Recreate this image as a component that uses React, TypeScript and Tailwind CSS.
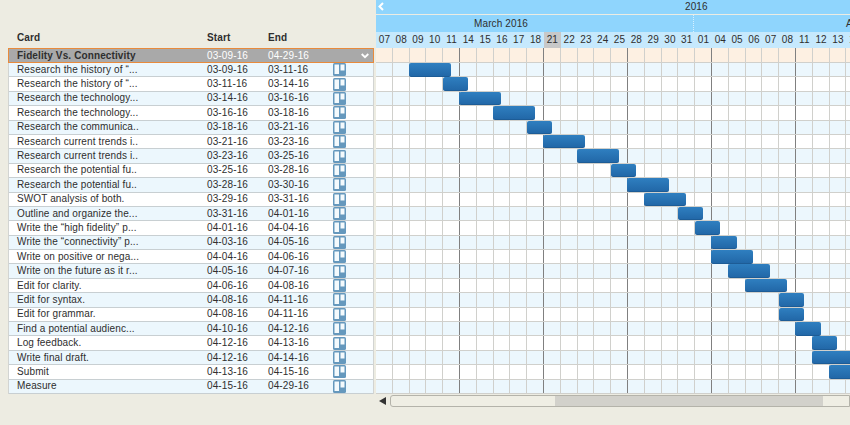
const rows: [string, string, string, number, number][] = [
  ["Research the history of “...", "03-09-16", "03-11-16", 2, 2.5],
  ["Research the history of “...", "03-11-16", "03-14-16", 4, 1.5],
  ["Research the technology...", "03-14-16", "03-16-16", 5, 2.5],
  ["Research the technology...", "03-16-16", "03-18-16", 7, 2.5],
  ["Research the communica..", "03-18-16", "03-21-16", 9, 1.5],
  ["Research current trends i..", "03-21-16", "03-23-16", 10, 2.5],
  ["Research current trends i..", "03-23-16", "03-25-16", 12, 2.5],
  ["Research the potential fu..", "03-25-16", "03-28-16", 14, 1.5],
  ["Research the potential fu..", "03-28-16", "03-30-16", 15, 2.5],
  ["SWOT analysis of both.", "03-29-16", "03-31-16", 16, 2.5],
  ["Outline and organize the...", "03-31-16", "04-01-16", 18, 1.5],
  ["Write the “high fidelity” p...", "04-01-16", "04-04-16", 19, 1.5],
  ["Write the “connectivity” p...", "04-03-16", "04-05-16", 20, 1.5],
  ["Write on positive or nega...", "04-04-16", "04-06-16", 20, 2.5],
  ["Write on the future as it r...", "04-05-16", "04-07-16", 21, 2.5],
  ["Edit for clarity.", "04-06-16", "04-08-16", 22, 2.5],
  ["Edit for syntax.", "04-08-16", "04-11-16", 24, 1.5],
  ["Edit for grammar.", "04-08-16", "04-11-16", 24, 1.5],
  ["Find a potential audienc...", "04-10-16", "04-12-16", 25, 1.5],
  ["Log feedback.", "04-12-16", "04-13-16", 26, 1.5],
  ["Write final draft.", "04-12-16", "04-14-16", 26, 2.5],
  ["Submit", "04-13-16", "04-15-16", 27, 2.5],
  ["Measure", "04-15-16", "04-29-16", 40, 2.5],
];
const days = ["07","08","09","10","11","14","15","16","17","18","21","22","23","24","25","28","29","30","31","01","04","05","06","07","08","11","12","13","14"];
const COL = 16.8;

function TrelloIcon() {
  return (
    <svg width="13" height="13" viewBox="0 0 13 13" className="block">
      <rect width="13" height="13" rx="1.5" fill="#6598bd" />
      <rect x="1.5" y="1.5" width="4.5" height="9.5" fill="#f4fafd" />
      <rect x="7.5" y="1.5" width="4" height="6" fill="#f4fafd" />
    </svg>
  );
}

function GridCells() {
  return (
    <>
      {days.map((d, i) => (
        <div
          key={i}
          style={{ width: COL }}
          className={`h-full shrink-0 border-r ${(i + 1) % 5 === 0 ? "border-[#808080]" : "border-[#d0d0cc]"}`}
        />
      ))}
    </>
  );
}

export default function App() {
  return (
    <div className="flex h-[425px] w-[850px] overflow-hidden bg-[#edece2] font-['Liberation_Sans',sans-serif] text-[10px] leading-none tracking-[0.12px] text-[#2e2e2e]">
      <div className="flex w-[376px] shrink-0 flex-col pl-2 pr-[2px]">
        <div className="flex h-[48px] items-end pb-[5px] font-bold">
          <span className="w-[199px] pl-[9px]">Card</span>
          <span className="w-[61px]">Start</span>
          <span>End</span>
        </div>
        <div className="flex h-[15px] items-center border border-[#e88a3c] bg-[#a9a9a9] font-bold">
          <span className="w-[198px] pl-2">Fidelity Vs. Connectivity</span>
          <span className="w-[61px] font-normal text-white">03-09-16</span>
          <span className="w-[93px] font-normal text-white">04-29-16</span>
          <svg width="8" height="6" viewBox="0 0 8 6" fill="none" stroke="#fff" strokeWidth="1.8">
            <path d="M.7 1L4 4.2 7.3 1" />
          </svg>
        </div>
        <div className="border-x border-[#d2d4d2]">
          {rows.map((r, i) => (
            <div
              key={i}
              className={`flex h-[14.4px] items-center border-b border-[#c8cfd2] ${i % 2 === 0 ? "bg-[#ecf7fd]" : "bg-white"}`}
            >
              <span className="w-[198px] pl-2 whitespace-nowrap">{r[0]}</span>
              <span className="w-[61px]">{r[1]}</span>
              <span className="w-[65px]">{r[2]}</span>
              <TrelloIcon />
            </div>
          ))}
        </div>
      </div>
      <div className="flex min-w-0 flex-1 flex-col">
        <div className="relative flex h-[14px] items-center bg-[#8fd5fd] pl-[309px]">
          <span>2016</span>
          <svg width="6" height="9" viewBox="0 0 6 9" fill="none" stroke="#fff" strokeWidth="2" className="absolute left-[2px] top-[2px]">
            <path d="M5 1L1.5 4.5 5 8" />
          </svg>
        </div>
        <div className="mt-[1px] flex h-[17px] bg-[#8fd5fd]">
          <div className="flex w-[318px] shrink-0 items-center border-r border-dotted border-[#d6f0ff] pl-[98px]">March 2016</div>
          <div className="flex flex-1 items-center whitespace-nowrap pl-[152px]">April 2016</div>
        </div>
        <div className="flex h-[16px] bg-[#c6e9fd]">
          {days.map((d, i) => (
            <div
              key={i}
              style={{ width: COL }}
              className={`flex shrink-0 items-center justify-center ${d === "21" ? "bg-[#c8c8c8]" : ""}`}
            >
              {d}
            </div>
          ))}
        </div>
        <div className="flex h-[15px] border-b border-[#d0d0cc] bg-[#fdf0e2]">
          <GridCells />
        </div>
        {rows.map((r, i) => (
          <div
            key={i}
            className={`relative flex h-[14.4px] shrink-0 border-b border-[#d0d0cc] ${i % 2 === 0 ? "bg-[#ecf7fd]" : "bg-white"}`}
          >
            <GridCells />
            <div
              style={{ left: r[3] * COL - 0.6, width: r[4] * COL }}
              className="absolute top-0 z-10 h-[13.5px] rounded-[2px] border-b border-[#1d5c96] bg-gradient-to-b from-[#2f7fc0] to-[#2268a8]"
            />
          </div>
        ))}
        <div className="flex items-center pt-[1px]">
          <svg width="10" height="8" viewBox="0 0 10 8" className="ml-[2px] mr-[2px] shrink-0">
            <path d="M8 0v8L1 4z" fill="#333" />
          </svg>
          <div className="flex h-[12px] flex-1 overflow-hidden rounded-l-[3px] border border-[#b4b3aa] bg-[#efeee4]">
            <div className="w-[164px] shrink-0" />
            <div className="w-[268px] shrink-0 bg-[#d2d1cb]" />
          </div>
        </div>
      </div>
    </div>
  );
}
